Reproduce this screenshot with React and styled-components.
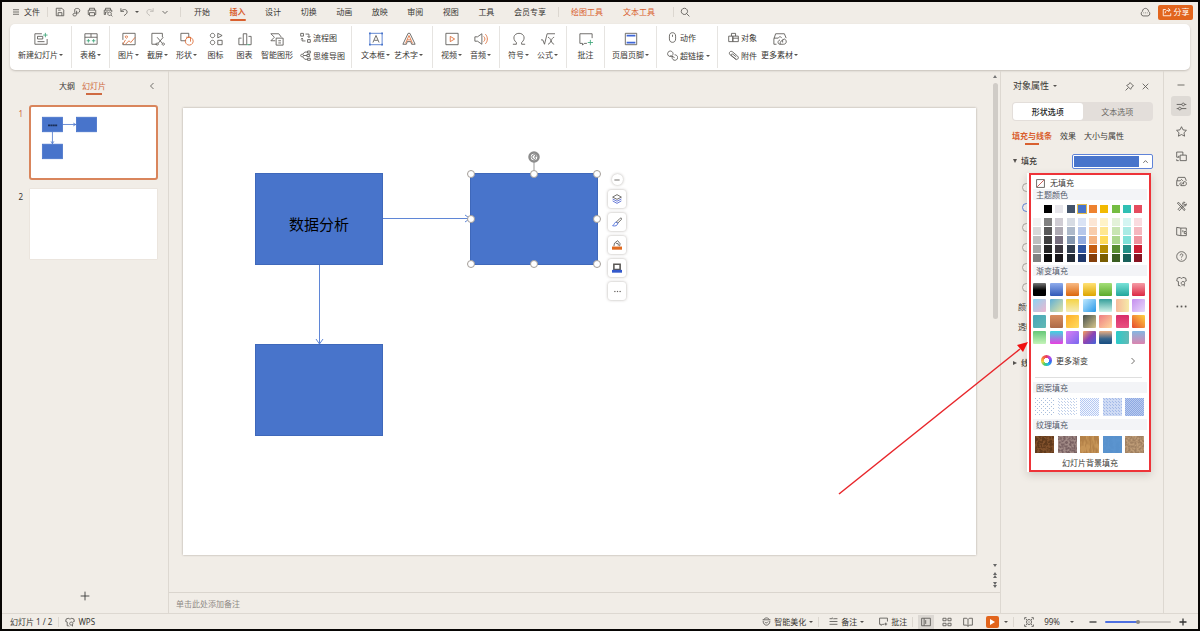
import React, { useState } from 'react';
import styled, { createGlobalStyle } from 'styled-components';

const GlobalStyle = createGlobalStyle`
  * {
    box-sizing: border-box;
  }

  body {
    margin: 0;
    background: #000;
    color: #3a3835;
    font-family: 'Noto Sans', 'Noto Sans CJK SC', sans-serif;
    font-size: 8px;
    line-height: 12px;
  }

  button {
    display: flex;
    align-items: center;
    justify-content: center;
    padding: 0;
    border: 0;
    background: none;
    color: inherit;
    font: inherit;
    white-space: nowrap;
    cursor: pointer;
  }

  svg {
    display: block;
    flex: none;
  }
`;

const Window = styled.div`
  display: flex;
  flex-direction: column;
  height: 100vh;
  min-height: 600px;
  border: 2px solid #080604;
  background: #f1ede7;
  overflow: hidden;
`;

/* ---------- icons ---------- */

const G = '#5a5754';
const BLUE = '#4874cb';
const ORANGE = '#dd6b35';
const GREEN = '#3fa67a';

const icons = {
  menu: <path d="M2 3.5h12M2 8h12M2 12.5h12" />,
  save: <path d="M2 2h9l3 3v9H2zM5 14V9h6v5M5 5h4" />,
  pdf: <path d="M6 9V4c0-2 8-3 8 1.500S10 10 9 9.500V6M9 9v3c0 3-6 3-6 .5S6 9.500 9 10" />,
  print: <path d="M4 5V2h8v3M4 12H2V5h12v7h-2M4 9h8v5H4z" />,
  preview: <path d="M4 5V2h8v3M4 12H2V5h12v3M4 12V8h4M10.500 8a2.800 2.800 0 1 0 .1 0M13 13l2 2" />,
  undo: <path d="M3 2v5h5M3 7c3-4 10-4 10 1 0 3-3 4-5 6" />,
  redo: <path d="M13 2v5H8M13 7C10 3 3 3 3 8c0 3 3 4 5 6" />,
  down: <path d="M3 6l5 5 5-5" />,
  up: <path d="M3 11l5-5 5 5" />,
  left: <path d="M11 2L5 8l6 6" />,
  right: <path d="M5 2l6 6-6 6" />,
  search: <path d="M7 2a5 5 0 1 0 .1 0M10.500 10.500L15 15" />,
  cloud: <path d="M4.500 13a3.500 3.500 0 0 1-1-6.500C4 3 6 2 8 2s4 1.500 4.500 4.500a3.500 3.500 0 0 1-1 6.500zM5 8.500h1M7.500 8.500h1M10 8.500h1" />,
  share: <path d="M6 4H2v10h12v-4M5 10c0-4 3-5 8-5M10 2l3 3-3 3" />,
  slideNew: (
    <>
      <path d="M9 2H1v12h14V8M4 5h6v3H4zM4 11h8" />
      <path d="M13 1v5M10.500 3.500h5" stroke={GREEN} />
    </>
  ),
  table: (
    <>
      <path d="M1 2h14v12H1zM1 6h14M8 2v4" />
      <path d="M3 10h4M9 10h4M5 8v4M11 8v4" stroke={GREEN} />
    </>
  ),
  picture: (
    <>
      <path d="M1 9V1.500h14v13H1V12" />
      <path d="M4 14l4-4 2 2 5-6M5 4.500a1.200 1.200 0 1 0 .1 0M1 14l3-5" stroke={ORANGE} />
    </>
  ),
  capture: <path d="M7 14H1V1.500h12V6M7 6l6 7M14 6l-6 7M7 12.500a1.300 1.300 0 1 0 .1 0M14 12.500a1.300 1.300 0 1 0 .1 0" />,
  shapes: (
    <>
      <path d="M7 10H1V1.500h9V6" />
      <path d="M10.500 6a4.500 4.500 0 1 0 .1 0M7 6h5v5" stroke={ORANGE} />
    </>
  ),
  glyphs: <path d="M4 1.500a2.500 2.500 0 1 0 .1 0M10 1.500l5 2.500-5 2.700zM4 9.500A2.500 2.500 0 1 0 4.100 9.500M10 9.500h5v5h-5z" />,
  chart: (
    <>
      <path d="M6 14.500H1V7h3M12 5h3v9.500h-3" />
      <path d="M6 14.500V2h4v12.500z" />
      <path d="M10 14.500h3" stroke={GREEN} />
    </>
  ),
  smart: <path d="M6 10H1l4-4-4-4h9l3 4M7 7h8v8H7zM9.500 10h3M9.500 12.500h3" />,
  flow: <path d="M1 2h4v4H1zM11 11h4v4h-4zM8 3h5v5M11 6l2 2 2-2M3 9v4h5M1.500 10.500L3 9l1.500 1.500" />,
  mind: <path d="M3 6a2 2 0 1 0 .1 0M5 8h5M11 1.500h4v3h-4zM10 6.500h4v3h-4zM11 12h4v3h-4zM4 6l3-3h4M4 10l3 3.500h4" />,
  textBox: (
    <>
      <path d="M1 1.500h14v13H1z" stroke={BLUE} />
      <path d="M4.500 12L8 4l3.500 8M6 9.500h4" />
      <path d="M0 .5h2v2H0zM14 .5h2v2h-2zM0 13.500h2v2H0zM14 13.500h2v2h-2z" fill={BLUE} stroke="none" />
    </>
  ),
  wordArt: (
    <>
      <path d="M1 14L7 1.500h2L15 14h-4l-1-3H6l-1 3z" />
      <path d="M4 13l4-9 4 9M6 9h4" stroke={ORANGE} />
    </>
  ),
  video: (
    <>
      <path d="M1 1.500h14v13H1z" />
      <path d="M6 5l5 3-5 3z" stroke={ORANGE} />
    </>
  ),
  audio: (
    <>
      <path d="M1 5.500h3L9 2v12l-5-3.500H1z" />
      <path d="M11 5c2 2 2 4 0 6M13 2.500c3 3 3 8 0 11" stroke={ORANGE} />
    </>
  ),
  omega: <path d="M1 14h4v-2C0 8 2 1.500 8 1.500S16 8 11 12v2h4" />,
  formula: <path d="M0 9h2l2 5L7 2h9M8 6c3 0 4 8 7 8M15 6c-3 0-4 8-7 8" />,
  comment: (
    <>
      <path d="M15 7V2H1v11h3v2l2-2h3" />
      <path d="M13 9v6M10 12h6" stroke={GREEN} />
    </>
  ),
  header: (
    <>
      <path d="M1.500 1.500h13v13h-13z" />
      <path d="M3 4h10M3 12h10" stroke="#3f67d8" strokeWidth="2" />
    </>
  ),
  mouse: <path d="M8 1c3 0 4.500 2 4.500 5v4c0 3-1.500 5-4.500 5s-4.500-2-4.500-5V6c0-3 1.500-5 4.500-5zM8 4v3" />,
  link: <path d="M5 1.500a4 4 0 1 0 3 6.500M8.500 7A4 4 0 0 0 5 1.500M11 7a4 4 0 1 1-3 2M5 8l6 3" />,
  object: <path d="M5 6V2h6v4M1 6h6v8H1zM7 6h8v8H7zM7 9h8" />,
  clip: <path d="M12 14L3 7C0 4 4 0 7 3l7 6c3 3-1 6-3 4L5 8c-1-1 0-3 2-2l5 4" />,
  more: <path d="M4 14H1V8l2-6h10l2 5M1 7h5l2-2 2 2M8 9c-3 1-3 5 0 5h4c4 0 4-5 1-6M8 14c0-3 2-5 5-6M11 9v3" />,
  pin: <path d="M9 1l6 6-2 1-2 3-1 2-7-7 2-1 3-2zM6 10l-5 5" />,
  close: <path d="M3 3l10 10M13 3L3 13" />,
  minus: <path d="M1 8h14" />,
  plus: <path d="M1 8h14M8 1v14" />,
  settings: <path d="M1 5h7.500M12.500 5H15M10.500 3a2 2 0 1 0 .1 0M1 11h2.500M7.500 11H15M5.500 9a2 2 0 1 0 .1 0" />,
  star: <path d="M8 1l2.200 4.600 5 .7-3.600 3.500.9 5L8 12.400l-4.500 2.400.9-5L.8 6.300l5-.7z" />,
  copies: <path d="M5 9H1V1.500h9V6M6 6h9v8H6zM1 12v2h3M4 7v2" />,
  tools: <path d="M2 3l2-1 9 10-1 2zM13 2c-3-1-4 1-3 3L3 12l2 2 6-7c3 1 5-1 4-3l-2 2-2-2z" />,
  book: <path d="M7 3L1 2v11l6 1zM7 3h8v4M7 14h8v-3M10 6v3M12 8h3v3h-3z" />,
  help: <path d="M8 1a7 7 0 1 0 .1 0M6 6.500c0-3 4-3 4-.5 0 1.500-2 1.500-2 3.500M8 11.500v1" />,
  shirt: <path d="M6 14H3.500V8L1 7l1-4 4-1c1 2 3 2 4 0l4 1 1 4-2.500 1M10 8a2.500 2.500 0 1 0 .1 0M12 12v3M8 14l-1 1" />,
  dots: <path d="M1 7h2v2H1zM7 7h2v2H7zM13 7h2v2h-2z" fill={G} />,
  layers: (
    <>
      <path d="M8 1l7 4-7 3.500L1 5z" />
      <path d="M1 8l7 3.500L15 8M1 11l7 4 7-4" stroke="#4d62cf" />
    </>
  ),
  brush: (
    <>
      <path d="M7 8l6-6c2-1 3 0 2 2l-6 6z" />
      <path d="M7 8c-3 0-3 4-6 6 4 1 8 0 8-4z" stroke="#4164d8" />
    </>
  ),
  bucket: (
    <>
      <path d="M3 10l1-5 5-4 4 5-1 4M6 5l4 1v3" />
      <path d="M0 10.500h16v5H0z" fill="#e06b20" stroke="none" />
    </>
  ),
  frame: (
    <>
      <path d="M3 10.500V2h10v8.500z" strokeWidth="2.500" />
      <path d="M0 11h16v4.500H0z" fill="#3459cb" stroke="none" />
    </>
  ),
  beautify: <path d="M3 5c2-5 9-4 10 0M1 5h14M2 7c0 10 12 10 12 0M5 9c2 2 4 2 6-1" />,
  notes: <path d="M1 3h5M9 3h6M1 8h14M1 13h14M6 1l2 3" />,
  bubble: <path d="M9 13H6l-2 2v-2H1V2h14v6M12 10v5M9.500 12.500h5" />,
  normal: <path d="M1 2h14v12H1zM5 2v12M7.500 5v6" />,
  grid: <path d="M1.500 2h5v4h-5zM9.500 2h5v4h-5zM1.500 10h5v4h-5zM9.500 10h5v4h-5z" />,
  read: <path d="M8 4L6 2H1v11h5l2 2 2-2h5V2h-5zM8 4v11" />,
  focus: <path d="M1 4V1h3M12 1h3v3M15 12v3h-3M4 15H1v-3M8 4a4 4 0 1 0 .1 0M8 7v2M3 3l2 2M13 3l-2 2M3 13l2-2M13 13l-2-2" />,
  none: (
    <>
      <path d="M1 1h14v14H1z" />
      <path d="M2 14L14 2" stroke="#c2453f" />
    </>
  ),
};

function Icon({ name, size = 10, color = G, weight = 1 }) {
  return (
    <svg
      width={size}
      height={size}
      viewBox="0 0 16 16"
      fill="none"
      stroke={color}
      strokeWidth={(weight * 16) / size * 0.85}
      aria-hidden="true"
    >
      {icons[name]}
    </svg>
  );
}

const Caret = styled.i`
  flex: none;
  border: 2px solid transparent;
  border-top-color: #55524f;
  border-bottom: 0;
`;

/* ---------- title bar ---------- */

const TitleBar = styled.header`
  display: flex;
  align-items: center;
  height: 22px;
  padding: 0 5px 2px 10px;
`;

const FileButton = styled.button`
  gap: 4px;
`;

const Divider = styled.span`
  width: 1px;
  height: 10px;
  margin: 0 ${(p) => p.$gap || 7}px;
  background: #dcd7d0;
`;

const QuickTools = styled.div`
  display: flex;
  align-items: center;
  gap: 6px;
  margin-right: 4px;
`;

const QuickButton = styled.button`
  gap: 6px;
  opacity: ${(p) => (p.disabled ? 0.35 : 1)};
`;

const Tabs = styled.nav`
  display: flex;
  justify-content: space-between;
  width: 352px;
  margin-left: 6px;
`;

const Tab = styled.button`
  position: relative;
  height: 18px;
  color: ${(p) => (p.$active || p.$context ? '#d9602f' : 'inherit')};
  font-weight: ${(p) => (p.$active ? 700 : 400)};

  &::after {
    content: '';
    position: absolute;
    right: 0;
    bottom: 0;
    left: 0;
    height: ${(p) => (p.$active ? 2 : 0)}px;
    border-radius: 1px;
    background: #d9602f;
  }
`;

const ContextTabs = styled.nav`
  display: flex;
  gap: 20px;
  margin-right: 12px;
`;

const TitleEnd = styled.div`
  display: flex;
  align-items: center;
  gap: 7px;
  margin-left: auto;
`;

const ShareButton = styled.button`
  gap: 2px;
  width: 35px;
  height: 15px;
  border-radius: 2px;
  background: #e2651d;
  color: #fff;
`;

/* ---------- ribbon ---------- */

const Ribbon = styled.section`
  display: flex;
  align-items: center;
  height: 46px;
  margin: 0 8px;
  border-radius: 5px;
  background: #fff;
  box-shadow: 0 1px 2px rgba(70, 60, 50, 0.25);
`;

const Group = styled.div`
  display: flex;
  align-items: center;
  height: 42px;
  padding: 0 ${(p) => p.$pad || 4}px;
  border-right: 1px solid #e6e4e1;

  &:last-child {
    border-right: 0;
  }
`;

const Tool = styled.button`
  flex-direction: column;
  gap: 3px;
  min-width: 29px;
  padding: 0 2px 1px;
`;

const ToolLabel = styled.span`
  display: flex;
  align-items: center;
  gap: 1px;
`;

const Stack = styled.div`
  display: flex;
  flex-direction: column;
  gap: 6px;
  padding: 0 2px 1px 5px;
`;

const RowTool = styled.button`
  justify-content: flex-start;
  gap: 2px;
`;

const ribbonGroups = [
  { pad: 6, items: [['slideNew', '新建幻灯片', true]] },
  { items: [['table', '表格', true]] },
  {
    items: [
      ['picture', '图片', true],
      ['capture', '截屏', true],
      ['shapes', '形状', true],
      ['glyphs', '图标'],
      ['chart', '图表'],
      ['smart', '智能图形'],
    ],
    after: [['flow', '流程图'], ['mind', '思维导图']],
  },
  { pad: 7, items: [['textBox', '文本框', true], ['wordArt', '艺术字', true]] },
  { items: [['video', '视频', true], ['audio', '音频', true]] },
  { items: [['omega', '符号', true], ['formula', '公式', true]] },
  { items: [['comment', '批注']] },
  { pad: 5, items: [['header', '页眉页脚', true]] },
  { pad: 5, before: [['mouse', '动作'], ['link', '超链接', true]] },
  { pad: 5, before: [['object', '对象'], ['clip', '附件']], items: [['more', '更多素材', true]] },
];

function RowTools({ items }) {
  return (
    <Stack>
      {items.map(([icon, label, menu]) => (
        <RowTool key={label}>
          <Icon name={icon} size={11} />
          {label}
          {menu && <Caret />}
        </RowTool>
      ))}
    </Stack>
  );
}

/* ---------- workspace ---------- */

const Workspace = styled.main`
  display: flex;
  flex: 1;
  min-height: 0;
  margin-top: 1px;
`;

const Outline = styled.aside`
  display: flex;
  flex-direction: column;
  width: 167px;
  padding: 8px 10px 12px 16px;
  border-right: 1px solid #ddd8d1;
`;

const OutlineTabs = styled.div`
  display: flex;
  align-items: center;
  gap: 7px;
  height: 14px;
  margin-bottom: 12px;
  padding: 0 2px 0 41px;

  & > :last-child {
    margin-left: auto;
  }
`;

const OutlineTab = styled.button`
  position: relative;
  color: ${(p) => (p.$active ? '#cf6a42' : 'inherit')};

  &::after {
    content: '';
    position: absolute;
    bottom: -3px;
    width: ${(p) => (p.$active ? 16 : 0)}px;
    height: 2px;
    background: #cf6a42;
  }
`;

const ThumbRow = styled.div`
  display: flex;
  gap: 6px;
  margin-bottom: 8px;
  color: ${(p) => (p.$active ? '#cf6a42' : 'inherit')};
`;

const ThumbNumber = styled.span`
  width: 5px;
  padding-top: 3px;
  text-align: right;
`;

const Thumb = styled.button`
  flex: 1;
  height: ${(p) => (p.$active ? 75 : 72)}px;
  border: ${(p) => (p.$active ? '2px solid #d9855c' : '1px solid #ebe5de')};
  border-radius: ${(p) => (p.$active ? 3 : 1)}px;
  background: #fff;

  svg {
    width: 100%;
  }
`;

const AddSlide = styled.button`
  align-self: center;
  margin: auto 6px 0 0;
`;

const Editor = styled.section`
  display: flex;
  flex: 1;
  flex-direction: column;
  min-width: 0;
`;

const Stage = styled.div`
  display: flex;
  flex: 1;
  min-height: 0;
`;

const Slide = styled.div`
  position: relative;
  flex: 1;
  margin: 37px 14px 37px 14px;
  background: #fff;
  box-shadow: 0 0 2px rgba(80, 70, 60, 0.45);
`;

const Connectors = styled.svg`
  position: absolute;
  inset: 0;
`;

const Shape = styled.div`
  position: absolute;
  left: ${(p) => p.$x}px;
  top: ${(p) => p.$y}px;
  display: flex;
  align-items: center;
  justify-content: center;
  width: 128px;
  height: 92px;
  padding-top: 10px;
  border: 1px solid #3f68ba;
  background: ${BLUE};
  color: #000;
  font-size: 15px;
  line-height: 20px;
`;

const Handle = styled.i`
  position: absolute;
  left: ${(p) => p.$x}%;
  top: ${(p) => p.$y}%;
  width: 8px;
  height: 8px;
  border: 1px solid #a39d98;
  border-radius: 50%;
  background: #fff;
  transform: translate(-50%, -50%);
`;

const Rotate = styled.svg`
  position: absolute;
  left: 56px;
  top: -24px;
`;

const FloatBar = styled.div`
  position: absolute;
  left: 425px;
  top: 66px;
  display: flex;
  flex-direction: column;
  align-items: center;
  gap: 5px;
`;

const FloatButton = styled.button`
  width: ${(p) => (p.$round ? 11 : 18)}px;
  height: ${(p) => (p.$round ? 11 : 18)}px;
  border-radius: ${(p) => (p.$round ? 6 : 3)}px;
  background: #fff;
  box-shadow: 0 0 3px rgba(60, 50, 40, 0.4);
`;

const ScrollBar = styled.div`
  display: flex;
  flex-direction: column;
  align-items: center;
  justify-content: space-between;
  width: 10px;
  padding: 4px 0 2px;
`;

const ScrollThumb = styled.div`
  width: 5px;
  height: 236px;
  margin: 5px 0 auto;
  border-radius: 3px;
  background: #d0ccc7;
`;

const ScrollButton = styled.button`
  height: 10px;
`;

const Notes = styled.input`
  height: 21px;
  padding: 0 7px;
  border: 0;
  border-top: 1px solid #dad5ce;
  background: none;
  font: inherit;

  &::placeholder {
    color: #8f8a85;
    opacity: 1;
  }
`;

/* ---------- property panel ---------- */

const Panel = styled.aside`
  width: 163px;
  padding: 7px 10px 0 11px;
  border-left: 1px solid #ddd8d1;
`;

const PanelHead = styled.div`
  display: flex;
  align-items: center;
  height: 16px;
  font-size: 9px;
`;

const PanelTitle = styled.button`
  gap: 4px;
  margin-right: auto;
  padding-left: 1px;
`;

const PanelAction = styled.button`
  width: 16px;
  height: 16px;
`;

const Segmented = styled.div`
  display: flex;
  height: 19px;
  margin-top: 8px;
  padding: 1px;
  border-radius: 4px;
  background: #e3deda;
`;

const Segment = styled.button`
  flex: 1;
  border-radius: 3px;
  background: ${(p) => (p.$active ? '#fff' : 'none')};
  color: ${(p) => (p.$active ? '#222' : '#6a6764')};
  font-weight: ${(p) => (p.$active ? 500 : 400)};
`;

const SubTabs = styled.div`
  display: flex;
  gap: 8px;
  margin: 9px 0;
`;

const SubTab = styled.button`
  position: relative;
  color: ${(p) => (p.$active ? '#d9602f' : 'inherit')};
  font-weight: ${(p) => (p.$active ? 700 : 400)};

  &::after {
    content: '';
    position: absolute;
    bottom: -3px;
    width: ${(p) => (p.$active ? 14 : 0)}px;
    height: 2px;
    background: #d9602f;
  }
`;

const FillRow = styled.div`
  position: relative;
  display: flex;
  align-items: center;
  justify-content: space-between;
  height: 20px;
`;

const SectionToggle = styled.button`
  gap: 4px;
  padding-left: 1px;
  font-weight: 500;
`;

const Triangle = styled.i`
  width: 0;
  border: 2px solid transparent;
  border-${(p) => (p.$open ? 'top' : 'left')}: 4px solid #55524f;
  border-${(p) => (p.$open ? 'bottom' : 'right')}: 0;
`;

const FillButton = styled.button`
  gap: 3px;
  width: 81px;
  height: 15px;
  padding: 0 3px 0 1px;
  border: 1px solid #5f83d8;
  border-radius: 2px;
  background: #fff;

  &::before {
    content: '';
    flex: 1;
    height: 11px;
    background: ${BLUE};
  }
`;

const Options = styled.div`
  display: flex;
  flex-direction: column;
  align-items: flex-start;
  gap: 11px;
  margin-top: 12px;
  padding-left: 10px;
`;

const Option = styled.input`
  appearance: none;
  width: 9px;
  height: 9px;
  margin: 0;
  border: 1px solid ${(p) => (p.checked ? '#5f83d8' : '#aaa5a0')};
  border-radius: 50%;
  background: #f6f3ef;
`;

const Fields = styled.div`
  padding: 5px 0 16px 6px;
  line-height: 20px;
`;

/* ---------- fill menu ---------- */

const FillMenu = styled.div`
  position: absolute;
  top: 22px;
  right: 2px;
  z-index: 2;
  width: 124px;
  padding-left: 2px;
  background: #fff;
  box-shadow: 0 3px 8px rgba(60, 50, 40, 0.18);
`;

const MenuOutline = styled.div`
  padding: 2px 2px 0;
  border: 2px solid #ee3338;
`;

const NoFill = styled.button`
  gap: 5px;
  height: 12px;
  padding-left: 3px;
`;

const MenuTitle = styled.h3`
  height: 11px;
  margin: 0;
  padding-left: 3px;
  background: #f3f4f7;
  color: #52596a;
  font-size: 8px;
  font-weight: 400;
  line-height: 11px;
`;

const ThemeGrid = styled.div`
  display: grid;
  grid-template-columns: repeat(10, 8px);
  justify-content: space-between;
  row-gap: 1px;
  padding: 5px 5px 0 0;
`;

const ShadeGrid = styled(ThemeGrid)`
  padding-bottom: 3px;
`;

const Swatch = styled.button`
  width: 8px;
  height: 8px;
  background: ${(p) => p.$fill};
  outline: ${(p) => (p.$selected ? '1px solid #e4bd4e' : '0')};
`;

const GradientGrid = styled.div`
  display: grid;
  grid-template-columns: repeat(7, 13px);
  justify-content: space-between;
  row-gap: 3px;
  padding: 7px 2px 0 0;
`;

const GradientSwatch = styled.button`
  height: 13px;
  border-radius: 1px;
  background: ${(p) => p.$fill};
`;

const MoreGradients = styled.button`
  gap: 4px;
  width: 100%;
  height: 33px;
  padding: 0 10px 0 8px;

  & > :last-child {
    margin-left: auto;
  }
`;

const MenuRule = styled.hr`
  height: 1px;
  margin: 0 5px 4px 2px;
  border: 0;
  background: #dfdfdf;
`;

const Wheel = styled.i`
  width: 11px;
  height: 11px;
  border-radius: 50%;
  background: radial-gradient(#fff 30%, transparent 34%),
    conic-gradient(#e93b5f, #b848f0, #3667ee, #25b8ee, #44ce6e, #f2d437, #f5743c, #e93b5f);
`;

const FillTiles = styled.div`
  display: flex;
  justify-content: space-between;
  padding: 5px 3px 3px 2px;
`;

const Tile = styled.button`
  width: 19px;
  height: 18px;
  overflow: hidden;
`;

const BackgroundFill = styled.button`
  width: 100%;
  height: 14px;
`;

const Pointer = styled.svg`
  position: absolute;
  top: 168px;
  right: 122px;
  pointer-events: none;
`;

const themeColors = ['#ffffff', '#000000', '#e7e6eb', '#44546a', BLUE, '#ee822f', '#f2ba02', '#75bd42', '#30c0b4', '#e54c5e'];

const shades = [
  ['#f2f2f2', '#808080', '#d0cdd4', '#d7dce4', '#dae3f5', '#fce6d5', '#fff3c8', '#e3f2d9', '#d4f5f2', '#fadbdf'],
  ['#d9d9d9', '#595959', '#aeaab3', '#adb9ca', '#b6c7ea', '#f8cdac', '#ffe791', '#c8e5b3', '#a9ebe5', '#f5b7be'],
  ['#bfbfbf', '#404040', '#787080', '#8497b0', '#91abe0', '#f5b482', '#ffdb5a', '#acd78e', '#7ee1d9', '#ef949e'],
  ['#a6a6a6', '#262626', '#3c3840', '#333f50', '#2e54a1', '#c55e10', '#b68c02', '#588e31', '#249087', '#ca1d32'],
  ['#808080', '#0d0d0d', '#19171b', '#222a35', '#1f386b', '#843e0a', '#795d01', '#3a5e21', '#18605a', '#871321'],
];

const gradients = [
  'linear-gradient(#777, #000 55%)',
  'linear-gradient(#8facec, #3159b7)',
  'linear-gradient(#f8ba84, #dc670b)',
  'linear-gradient(#ffe174, #dda500)',
  'linear-gradient(#a4df78, #5caa2c)',
  'linear-gradient(#79e1d8, #21a69b)',
  'linear-gradient(#f59ba6, #dc2944)',
  'linear-gradient(135deg, #8dd5f3, #efb5cf)',
  'linear-gradient(135deg, #5eaed7, #e5e6a1)',
  'linear-gradient(#f5d344, #f4edba)',
  'linear-gradient(135deg, #bfe9ff, #2898e8)',
  'linear-gradient(#359f9b, #d1f2e8)',
  'linear-gradient(90deg, #f6b99b, #f6eaa8)',
  'linear-gradient(135deg, #c58eee, #e8d9fb)',
  'linear-gradient(135deg, #49a5b9, #61b9b5)',
  'linear-gradient(#d98f60, #ac6a47)',
  'linear-gradient(135deg, #ffae27, #ffdc60)',
  'linear-gradient(135deg, #46504d, #d8c68c)',
  'linear-gradient(135deg, #ee7d83, #ffd79c)',
  'linear-gradient(#d82d6a, #e95181)',
  'linear-gradient(45deg, #e5482d, #ffd342)',
  'linear-gradient(#65c778, #c4f4b8)',
  'linear-gradient(#3dd5df, #e83ee0)',
  'linear-gradient(135deg, #dd7df4, #7767ef)',
  'linear-gradient(135deg, #f8a15a, #8b43b5, #4465d8)',
  'linear-gradient(#e9ad82, #37658e 60%, #174d81)',
  'linear-gradient(90deg, #29cbc9, #65b9b5)',
  'linear-gradient(#85b6e1, #da85af)',
];

const patterns = [
  { step: 4, ink: '#a9bfdd', bg: '#ffffff' },
  { step: 3, ink: '#c0d0ea', bg: '#ffffff' },
  { step: 2, ink: '#b4c8f2', bg: '#f4f7fe' },
  { step: 3, ink: '#a3b9e8', bg: '#cfdbf4' },
  { step: 2, ink: '#8ea9e2', bg: '#b9caef' },
];

const textures = [
  { base: '#80502b', dark: '#603a1c', freq: '.4' },
  { base: '#a08985', dark: '#7a6263', freq: '.5' },
  { base: '#c79557', dark: '#b38148', freq: '.5 .12' },
  { base: '#5b94cf', dark: '#5891cc', freq: '.3' },
  { base: '#bd9b76', dark: '#a08060', freq: '.5' },
];

function PatternTile({ index, step, ink, bg }) {
  return (
    <Tile aria-label={`图案 ${index + 1}`}>
      <svg width="19" height="18">
        <defs>
          <pattern id={`dots${index}`} width={step} height={step} patternUnits="userSpaceOnUse">
            <rect width={step} height={step} fill={bg} />
            <rect width="1" height="1" fill={ink} />
            <rect x={Math.floor(step / 2)} y={Math.floor(step / 2)} width="1" height="1" fill={ink} />
          </pattern>
        </defs>
        <rect width="19" height="18" fill={`url(#dots${index})`} />
      </svg>
    </Tile>
  );
}

function TextureTile({ index, base, dark, freq }) {
  return (
    <Tile aria-label={`纹理 ${index + 1}`}>
      <svg width="19" height="17">
        <filter id={`grain${index}`} x="0" y="0" width="100%" height="100%" colorInterpolationFilters="sRGB">
          <feTurbulence type="fractalNoise" baseFrequency={freq} numOctaves="2" seed={index + 3} result="noise" />
          <feColorMatrix in="noise" values="0 0 0 0 0  0 0 0 0 0  0 0 0 0 0  5 0 0 0 -2" result="mask" />
          <feComposite in="SourceGraphic" in2="mask" operator="in" />
        </filter>
        <rect width="19" height="17" fill={base} />
        <rect width="19" height="17" fill={dark} filter={`url(#grain${index})`} />
      </svg>
    </Tile>
  );
}

/* ---------- rail and status bar ---------- */

const Rail = styled.aside`
  display: flex;
  flex-direction: column;
  align-items: center;
  gap: 5px;
  width: 35px;
  padding-top: 8px;
  border-left: 1px solid #ddd8d1;
`;

const RailButton = styled.button`
  width: 20px;
  height: ${(p) => (p.$short ? 12 : 20)}px;
  border-radius: 3px;
  background: ${(p) => (p.$active ? '#dedad5' : 'none')};
`;

const StatusBar = styled.footer`
  display: flex;
  align-items: center;
  height: 16px;
  padding: 0 6px 0 8px;
  border-top: 1px solid #ddd8d1;
`;

const StatusButton = styled.button`
  gap: 3px;
`;

const StatusEnd = styled.div`
  display: flex;
  align-items: center;
  gap: 5px;
  margin-left: auto;
`;

const StatusCell = styled.div`
  display: flex;
  align-items: center;
  gap: ${(p) => p.$gap || 3}px;
  height: 10px;
  padding: 0 5px;
  border-right: ${(p) => (p.$rule ? '1px solid #dcd7d0' : '0')};
`;

const ViewButton = styled.button`
  width: 16px;
  height: 14px;
  background: ${(p) => (p.$active ? '#dcd8d3' : 'none')};
`;

const PlayButton = styled.button`
  width: 13px;
  height: 12px;
  border-radius: 2px;
  background: #e2651d;
`;

const Zoom = styled.input`
  appearance: none;
  width: 66px;
  height: 2px;
  margin: 0;
  border-radius: 1px;
  background: linear-gradient(90deg, #4d6fe0 50%, #cbc7c2 50%);

  &::-webkit-slider-thumb {
    appearance: none;
    width: 4px;
    height: 4px;
    border: 0;
    border-radius: 2px;
    background: #8a8784;
  }
`;

const tabNames = ['开始', '插入', '设计', '切换', '动画', '放映', '审阅', '视图', '工具', '会员专享'];
const railIcons = [
  ['settings', '属性'],
  ['star', '收藏'],
  ['copies', '切换'],
  ['more', '素材'],
  ['tools', '工具'],
  ['book', '资料'],
  ['help', '帮助'],
  ['shirt', '皮肤'],
  ['dots', '更多'],
];
const handles = [[0, 0], [50, 0], [100, 0], [0, 50], [100, 50], [0, 100], [50, 100], [100, 100]];

function App() {
  const [tab, setTab] = useState('插入');
  const [fillType, setFillType] = useState(1);
  const [zoom, setZoom] = useState(50);

  return (
    <>
      <GlobalStyle />
      <Window>
        <TitleBar>
          <FileButton><Icon name="menu" size={8} />文件</FileButton>
          <Divider />
          <QuickTools>
            <QuickButton aria-label="保存"><Icon name="save" /></QuickButton>
            <QuickButton aria-label="输出为PDF"><Icon name="pdf" /></QuickButton>
            <QuickButton aria-label="打印"><Icon name="print" /></QuickButton>
            <QuickButton aria-label="打印预览"><Icon name="preview" /></QuickButton>
            <QuickButton aria-label="撤销"><Icon name="undo" /><Caret /></QuickButton>
            <QuickButton aria-label="恢复" disabled><Icon name="redo" /></QuickButton>
            <QuickButton aria-label="更多"><Icon name="down" size={8} /></QuickButton>
          </QuickTools>
          <Divider />
          <Tabs>
            {tabNames.map((name) => (
              <Tab key={name} $active={tab === name} onClick={() => setTab(name)}>{name}</Tab>
            ))}
          </Tabs>
          <Divider $gap={12} />
          <ContextTabs>
            <Tab $context>绘图工具</Tab>
            <Tab $context>文本工具</Tab>
          </ContextTabs>
          <Divider $gap={6} />
          <button aria-label="搜索"><Icon name="search" /></button>
          <TitleEnd>
            <button aria-label="云服务"><Icon name="cloud" size={11} /></button>
            <ShareButton><Icon name="share" size={10} color="#fff" />分享</ShareButton>
          </TitleEnd>
        </TitleBar>

        <Ribbon>
          {ribbonGroups.map((group, i) => (
            <Group key={i} $pad={group.pad}>
              {group.before && <RowTools items={group.before} />}
              {(group.items || []).map(([icon, label, menu]) => (
                <Tool key={label}>
                  <Icon name={icon} size={14} />
                  <ToolLabel>{label}{menu && <Caret />}</ToolLabel>
                </Tool>
              ))}
              {group.after && <RowTools items={group.after} />}
            </Group>
          ))}
        </Ribbon>

        <Workspace>
          <Outline>
            <OutlineTabs>
              <OutlineTab>大纲</OutlineTab>
              <OutlineTab $active>幻灯片</OutlineTab>
              <button aria-label="收起"><Icon name="left" size={8} /></button>
            </OutlineTabs>
            <ThumbRow $active>
              <ThumbNumber>1</ThumbNumber>
              <Thumb $active aria-label="幻灯片 1">
                <svg viewBox="0 0 793 448" fill={BLUE} stroke={BLUE} strokeWidth="5">
                  <rect x="72" y="65" width="128" height="92" />
                  <rect x="288" y="65" width="128" height="92" />
                  <rect x="72" y="236" width="128" height="92" />
                  <path d="M200 111h84M268 102l16 9-16 9M136 157v76M127 218l9 15 9-15" fill="none" />
                  <path d="M108 116h58" stroke="#1b2f58" strokeWidth="11" strokeDasharray="13 2" />
                </svg>
              </Thumb>
            </ThumbRow>
            <ThumbRow>
              <ThumbNumber>2</ThumbNumber>
              <Thumb aria-label="幻灯片 2" />
            </ThumbRow>
            <AddSlide aria-label="新建幻灯片"><Icon name="plus" size={10} color="#333" /></AddSlide>
          </Outline>

          <Editor>
            <Stage>
              <Slide>
                <Connectors width="100%" height="100%" fill="none" stroke="#5f86d6">
                  <path d="M200 110.500h87M282 107l5 3.500-5 3.500M136.500 157v79M133 231l3.500 5 3.500-5" />
                </Connectors>
                <Shape $x={72} $y={65}>数据分析</Shape>
                <Shape $x={72} $y={236} />
                <Shape $x={287} $y={65}>
                  <Rotate width="14" height="24" fill="none">
                    <path d="M7 12v8" stroke="#999" />
                    <circle cx="7" cy="7" r="4.500" stroke="#8c8c8c" strokeWidth="2.500" />
                    <path d="M9 8.500A2.300 2.300 0 1 1 9 5.500M9 4v3H7" stroke="#777" />
                  </Rotate>
                  {handles.map(([x, y]) => <Handle key={`${x}-${y}`} $x={x} $y={y} />)}
                </Shape>
                <FloatBar>
                  <FloatButton $round aria-label="收起工具"><Icon name="minus" size={6} /></FloatButton>
                  <FloatButton aria-label="叠放次序"><Icon name="layers" /></FloatButton>
                  <FloatButton aria-label="形状样式"><Icon name="brush" /></FloatButton>
                  <FloatButton aria-label="形状填充"><Icon name="bucket" /></FloatButton>
                  <FloatButton aria-label="形状轮廓"><Icon name="frame" /></FloatButton>
                  <FloatButton aria-label="更多"><Icon name="dots" size={7} weight={0.3} /></FloatButton>
                </FloatBar>
              </Slide>
              <ScrollBar>
                <svg width="4" height="3"><path d="M0 3l2-3 2 3z" fill="#777" /></svg>
                <ScrollThumb />
                <ScrollButton aria-label="向下滚动"><svg width="4" height="3"><path d="M0 0h4L2 3z" fill="#666" /></svg></ScrollButton>
                <ScrollButton aria-label="上一张"><svg width="4" height="6"><path d="M0 3l2-3 2 3zM0 6l2-3 2 3z" fill="#666" /></svg></ScrollButton>
                <ScrollButton aria-label="下一张"><svg width="4" height="6"><path d="M0 0h4L2 3zM0 3h4L2 6z" fill="#666" /></svg></ScrollButton>
              </ScrollBar>
            </Stage>
            <Notes aria-label="备注" placeholder="单击此处添加备注" />
          </Editor>

          <Panel>
            <PanelHead>
              <PanelTitle>对象属性<Caret /></PanelTitle>
              <PanelAction aria-label="固定"><Icon name="pin" size={9} /></PanelAction>
              <PanelAction aria-label="关闭"><Icon name="close" size={9} /></PanelAction>
            </PanelHead>
            <Segmented>
              <Segment $active>形状选项</Segment>
              <Segment>文本选项</Segment>
            </Segmented>
            <SubTabs>
              <SubTab $active>填充与线条</SubTab>
              <SubTab>效果</SubTab>
              <SubTab>大小与属性</SubTab>
            </SubTabs>
            <FillRow>
              <SectionToggle><Triangle $open />填充</SectionToggle>
              <FillButton aria-label="填充颜色"><Icon name="up" size={7} /></FillButton>
              <FillMenu>
                <MenuOutline>
                  <NoFill><Icon name="none" size={9} />无填充</NoFill>
                  <MenuTitle>主题颜色</MenuTitle>
                  <ThemeGrid>
                    {themeColors.map((c) => <Swatch key={c} $fill={c} $selected={c === BLUE} aria-label={c} />)}
                  </ThemeGrid>
                  <ShadeGrid>
                    {shades.flat().map((c, i) => <Swatch key={i} $fill={c} aria-label={c} />)}
                  </ShadeGrid>
                  <MenuTitle>渐变填充</MenuTitle>
                  <GradientGrid>
                    {gradients.map((g, i) => <GradientSwatch key={i} $fill={g} aria-label={`渐变 ${i + 1}`} />)}
                  </GradientGrid>
                  <MoreGradients><Wheel />更多渐变<Icon name="right" size={8} /></MoreGradients>
                  <MenuRule />
                  <MenuTitle>图案填充</MenuTitle>
                  <FillTiles>
                    {patterns.map((p, i) => <PatternTile key={i} index={i} {...p} />)}
                  </FillTiles>
                  <MenuTitle>纹理填充</MenuTitle>
                  <FillTiles>
                    {textures.map((t, i) => <TextureTile key={i} index={i} {...t} />)}
                  </FillTiles>
                  <BackgroundFill>幻灯片背景填充</BackgroundFill>
                </MenuOutline>
                <Pointer width="192" height="154">
                  <path d="M2 153L183 8" stroke="#e8262b" strokeWidth="1.500" />
                  <path d="M191 1l-5 10-6-7z" fill="#f01010" />
                </Pointer>
              </FillMenu>
            </FillRow>
            <Options>
              {['无填充', '纯色填充', '渐变填充', '图片或纹理填充', '图案填充', '背景填充'].map((label, i) => (
                <Option
                  key={label}
                  type="radio"
                  name="fill"
                  aria-label={label}
                  checked={fillType === i}
                  onChange={() => setFillType(i)}
                />
              ))}
            </Options>
            <Fields>
              <div>颜色</div>
              <div>透明度</div>
            </Fields>
            <FillRow>
              <SectionToggle><Triangle />线条</SectionToggle>
            </FillRow>
          </Panel>

          <Rail>
            <RailButton $short aria-label="收起"><Icon name="minus" size={8} /></RailButton>
            {railIcons.map(([name, label], i) => (
              <RailButton key={name} $active={i === 0} aria-label={label}>
                <Icon name={name} size={11} weight={name === 'dots' ? 0.3 : 1} />
              </RailButton>
            ))}
          </Rail>
        </Workspace>

        <StatusBar>
          <span>幻灯片 1 / 2</span>
          <Divider $gap={6} />
          <StatusButton><Icon name="shirt" />WPS</StatusButton>
          <StatusEnd>
            <StatusCell $rule><StatusButton><Icon name="beautify" size={9} />智能美化</StatusButton><Caret /></StatusCell>
            <StatusCell><StatusButton><Icon name="notes" size={9} />备注</StatusButton><Caret /></StatusCell>
            <StatusCell $rule><StatusButton><Icon name="bubble" size={9} />批注</StatusButton></StatusCell>
            <ViewButton $active aria-label="普通视图"><Icon name="normal" /></ViewButton>
            <ViewButton aria-label="幻灯片浏览"><Icon name="grid" /></ViewButton>
            <ViewButton aria-label="阅读视图"><Icon name="read" /></ViewButton>
            <StatusCell $rule $gap={5}>
              <PlayButton aria-label="放映">
                <svg width="5" height="6"><path d="M0 0l5 3-5 3z" fill="#fff" /></svg>
              </PlayButton>
              <Caret />
            </StatusCell>
            <StatusCell $gap={10}>
              <StatusButton aria-label="最佳显示比例"><Icon name="focus" /></StatusButton>
              <StatusButton>99%</StatusButton>
              <Caret />
            </StatusCell>
            <StatusCell $gap={8}>
              <button aria-label="缩小"><Icon name="minus" size={8} color="#333" weight={1.5} /></button>
              <Zoom
                type="range"
                aria-label="显示比例"
                value={zoom}
                onChange={(e) => setZoom(Number(e.target.value))}
              />
              <button aria-label="放大"><Icon name="plus" size={8} color="#333" weight={1.5} /></button>
            </StatusCell>
          </StatusEnd>
        </StatusBar>
      </Window>
    </>
  );
}

export default App;
